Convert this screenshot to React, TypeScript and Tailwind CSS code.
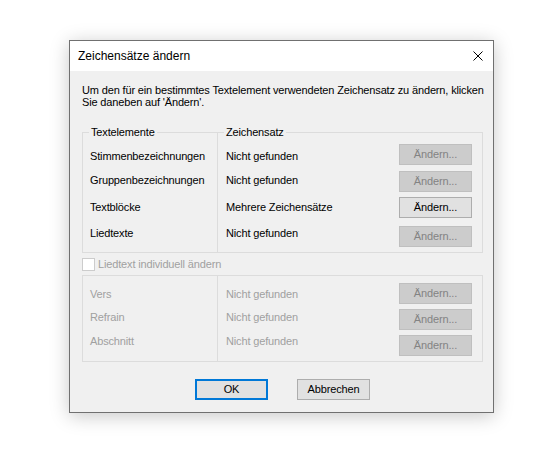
import React from "react";

const font = { fontFamily: '"Liberation Sans", Arial, sans-serif' };

type Row = { label: string; font: string; enabled: boolean; h: string; shift: string };

const rows1: Row[] = [
  { label: "Stimmenbezeichnungen", font: "Nicht gefunden", enabled: false, h: "h-[27px]", shift: "translate-y-[2px]" },
  { label: "Gruppenbezeichnungen", font: "Nicht gefunden", enabled: false, h: "h-[26px]", shift: "-translate-y-[1px]" },
  { label: "Textblöcke", font: "Mehrere Zeichensätze", enabled: true, h: "h-[29px]", shift: "translate-y-[0px]" },
  { label: "Liedtexte", font: "Nicht gefunden", enabled: false, h: "h-[21px]", shift: "-translate-y-[3px]" },
];

const rows2: Row[] = [
  { label: "Vers", font: "Nicht gefunden", enabled: false, h: "h-[26px]", shift: "translate-y-[1px]" },
  { label: "Refrain", font: "Nicht gefunden", enabled: false, h: "h-[26px]", shift: "-translate-y-[2px]" },
  { label: "Abschnitt", font: "Nicht gefunden", enabled: false, h: "h-[21px]", shift: "-translate-y-[4px]" },
];

function WinButton({ enabled, children, def }: { enabled: boolean; children: React.ReactNode; def?: boolean }) {
  if (!enabled) {
    return (
      <div className="w-[73px] h-[21px] border border-[#bfbfbf] bg-[#cccccc] text-[#838383] flex items-center justify-center text-[11px] leading-none tracking-[-0.15px]">
        {children}
      </div>
    );
  }
  if (def) {
    return (
      <div className="w-[73px] h-[21px] border-2 border-[#0078d7] bg-[#e1e1e1] text-black flex items-center justify-center text-[11px] leading-none tracking-[-0.15px]">
        {children}
      </div>
    );
  }
  return (
    <div className="w-[73px] h-[21px] border border-[#adadad] bg-[#e1e1e1] text-black flex items-center justify-center text-[11px] leading-none tracking-[-0.15px]">
      {children}
    </div>
  );
}

function Group({ rows, pt, legends, disabled }: { rows: Row[]; pt: string; legends?: boolean; disabled?: boolean }) {
  const labelColor = disabled ? "text-[#a0a0a0]" : "text-black";
  return (
    <div className="relative w-[401px] border border-[#dcdcdc] flex">
      {legends && (
        <>
          <div className={`absolute left-[6px] top-[-7px] px-[2px] bg-[#f0f0f0] text-[11px] leading-[13px] tracking-[-0.15px] ${labelColor}`}>Textelemente</div>
          <div className={`absolute left-[141px] top-[-7px] px-[2px] bg-[#f0f0f0] text-[11px] leading-[13px] tracking-[-0.15px] ${labelColor}`}>Zeichensatz</div>
        </>
      )}
      <div className={`w-[135px] border-r border-[#dcdcdc] ${pt} pb-[5px] flex flex-col`}>
        {rows.map((r) => (
          <div key={r.label} className={`${r.h} flex items-start`}>
            <div className={`h-[21px] flex items-center pl-[7px] text-[11px] leading-[13px] tracking-[-0.15px] whitespace-nowrap ${labelColor} ${r.shift}`}>
              {r.label}
            </div>
          </div>
        ))}
      </div>
      <div className={`flex-1 ${pt} pb-[5px] flex flex-col`}>
        {rows.map((r) => (
          <div key={r.label} className={`${r.h} flex items-start justify-between pr-[10px]`}>
            <div className={`h-[21px] flex items-center pl-[8px] text-[11px] leading-[13px] tracking-[-0.15px] whitespace-nowrap ${labelColor} ${r.shift}`}>
              {r.font}
            </div>
            <WinButton enabled={r.enabled && !disabled}>Ändern...</WinButton>
          </div>
        ))}
      </div>
    </div>
  );
}

export default function App() {
  return (
    <div className="w-[550px] h-[453px] bg-white pt-[40px] pl-[69px]" style={font}>
      <div className="w-[425px] h-[373px] border border-[#707070] shadow-[0_3px_18px_rgba(0,0,0,0.22)] flex flex-col">
        <div className="h-[30px] bg-white flex items-center justify-between pl-[8px] pr-[10px]">
          <span className="text-[12px] text-black leading-none">Zeichensätze ändern</span>
          <svg width="10" height="10" viewBox="0 0 10 10" className="block">
            <path d="M0.5 0.5 L9.5 9.5 M9.5 0.5 L0.5 9.5" stroke="#000" strokeWidth="1" fill="none" />
          </svg>
        </div>
        <div className="flex-1 bg-[#f0f0f0] pt-[13px] pl-[12px] pr-[10px] pb-[12px] flex flex-col">
          <div className="text-[11px] leading-[12px] tracking-[-0.15px] text-black whitespace-nowrap">
            Um den für ein bestimmtes Textelement verwendeten Zeichensatz zu ändern, klicken
            <br />
            Sie daneben auf 'Ändern'.
          </div>
          <div className="mt-[24px]">
            <Group rows={rows1} pt="pt-[11px]" legends />
          </div>
          <div className="mt-[5px] h-[13px] flex items-center">
            <div className="w-[13px] h-[13px] border border-[#cccccc] bg-white" />
            <span className="ml-[3px] text-[11px] leading-[13px] tracking-[-0.15px] text-[#a0a0a0]">Liedtext individuell ändern</span>
          </div>
          <div className="mt-[4px]">
            <Group rows={rows2} pt="pt-[7px]" disabled />
          </div>
          <div className="mt-[17px] flex justify-center gap-[29px]">
            <WinButton enabled def>OK</WinButton>
            <WinButton enabled>Abbrechen</WinButton>
          </div>
        </div>
      </div>
    </div>
  );
}
